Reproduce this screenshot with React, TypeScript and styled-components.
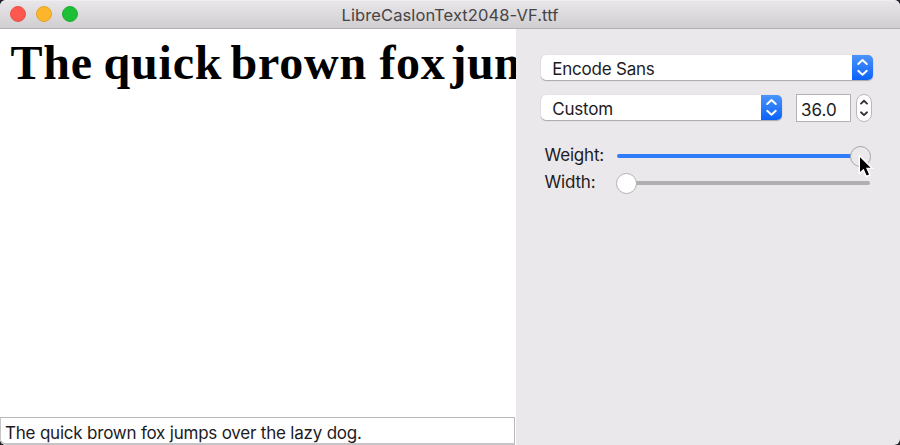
import React from "react";
import styled, { createGlobalStyle } from "styled-components";

const GlobalStyle = createGlobalStyle`
  * { box-sizing: border-box; }
  body { margin: 0; background: #24242a; overflow: hidden; }
`;

const Window = styled.div`
  width: 900px;
  height: 445px;
  display: flex;
  flex-direction: column;
  border-radius: 6px;
  overflow: hidden;
  background: #ebe8eb;
  color: #1d1b1e;
  font: 17px/22px Inter, "Liberation Sans", sans-serif;
`;

const TitleBar = styled.header`
  height: 29px;
  flex: none;
  display: grid;
  grid-template-columns: 100px 1fr 100px;
  background: linear-gradient(#e8e6e8, #d0ced0);
  border-top: 1px solid #efedef;
  border-bottom: 1px solid #b3b0b3;
`;

const Lights = styled.div`
  display: flex;
  gap: 10px;
  padding: 5.4px 0 0 10.2px;
`;

const Light = styled.span<{ $fill: string; $edge: string }>`
  width: 16px;
  height: 16px;
  border-radius: 50%;
  background: ${(p) => p.$fill};
  border: 1px solid ${(p) => p.$edge};
`;

const Title = styled.div`
  text-align: center;
  font-size: 16.5px;
  line-height: 29px;
  letter-spacing: 0.1px;
  color: #464446;
`;

const Content = styled.main`
  flex: 1;
  display: flex;
  min-height: 0;
`;

const PreviewPane = styled.section`
  width: 516px;
  display: flex;
  flex-direction: column;
  justify-content: space-between;
  background: #fff;
  overflow: hidden;
`;

const Sample = styled.div`
  display: flex;
  padding: 6px 0 0 10.5px;
  color: #000;
  font: bold 48px/56px "Liberation Serif", serif;
  white-space: nowrap;
`;

const Word = styled.span<{ $width: number; $spacing: number }>`
  flex: none;
  width: ${(p) => p.$width}px;
  letter-spacing: ${(p) => p.$spacing}px;
`;

const TextField = styled.div`
  width: 515px;
  height: 28px;
  padding: 4px 0 0 4px;
  border: 1px solid #b9b7b9;
  border-bottom: 2px solid #c6c4c6;
  border-left-color: #c6c4c6;
  border-radius: 0 0 0 6px;
  background: #fff;
  white-space: nowrap;
  letter-spacing: -0.21px;
`;

const Controls = styled.aside`
  flex: 1;
  padding: 26px 0 0 25px;
`;

const Row = styled.div<{ $top?: number }>`
  display: flex;
  align-items: flex-start;
  margin-top: ${(p) => p.$top ?? 0}px;
`;

const Popup = styled.div<{ $width: number }>`
  width: ${(p) => p.$width}px;
  height: 25px;
  display: flex;
  justify-content: space-between;
  border-radius: 5px;
  background: #fff;
  box-shadow: 0 1px 1px #aaa7aa, 0 0 1px #bbb8bb;
  overflow: hidden;
`;

const PopupLabel = styled.span`
  padding: 2.5px 0 0 11.3px;
  letter-spacing: -0.22px;
`;

const PopupButton = styled.span`
  width: 21px;
  height: 25px;
  background: linear-gradient(#4b94fb, #0b62f9);
`;

const NumberField = styled.div`
  width: 55px;
  height: 28px;
  margin: -1px 0 0 14px;
  padding: 4px 0 0 4px;
  border: 1px solid #b5b2b5;
  background: #fff;
`;

const Stepper = styled.div`
  width: 16px;
  height: 28px;
  margin: -1px 0 0 5px;
  border-radius: 8px;
  border: 1px solid #bcb9bc;
  background: #fff;
`;

const SliderRow = styled.div`
  height: 27px;
  display: flex;
  align-items: center;
`;

const SliderLabel = styled.span`
  width: 76px;
  padding: 0 0 2px 3.5px;
  letter-spacing: -0.2px;
`;

const Track = styled.div<{ $active?: boolean }>`
  position: relative;
  width: 253px;
  height: 4px;
  border-radius: 2px;
  background: ${(p) => (p.$active ? "#2f7cf8" : "#b0aeb0")};
`;

const Knob = styled.span<{ $left: number; $pressed?: boolean }>`
  position: absolute;
  top: -8px;
  left: ${(p) => p.$left}px;
  width: 21px;
  height: 21px;
  border-radius: 50%;
  border: 1px solid ${(p) => (p.$pressed ? "#a6a4a6" : "#b3b1b3")};
  background: ${(p) => (p.$pressed ? "#ebe9eb" : "#fff")};
`;

const Pointer = styled.svg`
  position: absolute;
  left: 241px;
  top: 0;
`;

const Arrows = () => (
  <PopupButton>
    <svg width="21" height="25" viewBox="0 0 21 25" fill="none" stroke="#fff" strokeWidth="1.9" strokeLinecap="round" strokeLinejoin="round">
      <path d="M6.2 9 10.5 5 14.8 9M6.2 15.8 10.5 19.8 14.8 15.8" />
    </svg>
  </PopupButton>
);

export default function App() {
  return (
    <>
      <GlobalStyle />
      <Window>
        <TitleBar>
          <Lights>
            <Light $fill="#fd5750" $edge="#e8514b" />
            <Light $fill="#fdb62c" $edge="#e3a22e" />
            <Light $fill="#1cbf36" $edge="#22ac35" />
          </Lights>
          <Title>LibreCaslonText2048-VF.ttf</Title>
        </TitleBar>
        <Content>
          <PreviewPane>
            <Sample>
              <Word $width={93} $spacing={0.8}>The</Word>
              <Word $width={127} $spacing={0.8}>quick</Word>
              <Word $width={149} $spacing={0.8}>brown</Word>
              <Word $width={71} $spacing={0.6}>fox</Word>
              <Word $width={140} $spacing={0.4}>jumps</Word>
            </Sample>
            <TextField>The quick brown fox jumps over the lazy dog.</TextField>
          </PreviewPane>
          <Controls>
            <Row>
              <Popup $width={332}>
                <PopupLabel>Encode Sans</PopupLabel>
                <Arrows />
              </Popup>
            </Row>
            <Row $top={15}>
              <Popup $width={241}>
                <PopupLabel>Custom</PopupLabel>
                <Arrows />
              </Popup>
              <NumberField>36.0</NumberField>
              <Stepper>
                <svg width="14" height="26" viewBox="0 0 14 26" fill="none" stroke="#333" strokeWidth="1.9" strokeLinecap="round" strokeLinejoin="round">
                  <path d="M4 8.6 7 5.8 10 8.6M4 17.3 7 20.1 10 17.3" />
                </svg>
              </Stepper>
            </Row>
            <Row $top={20}>
              <div>
                <SliderRow>
                  <SliderLabel>Weight:</SliderLabel>
                  <Track $active>
                    <Knob $left={233} $pressed />
                    <Pointer width="16" height="26" viewBox="0 0 16 26">
                      <path d="M1.3 1.5V19.5L5.4 15.8 8.3 22.5 12 20.9 9.1 14.4H14.4Z" fill="#000" stroke="#fff" strokeWidth="1.4" />
                    </Pointer>
                  </Track>
                </SliderRow>
                <SliderRow>
                  <SliderLabel>Width:</SliderLabel>
                  <Track>
                    <Knob $left={-1} />
                  </Track>
                </SliderRow>
              </div>
            </Row>
          </Controls>
        </Content>
      </Window>
    </>
  );
}
